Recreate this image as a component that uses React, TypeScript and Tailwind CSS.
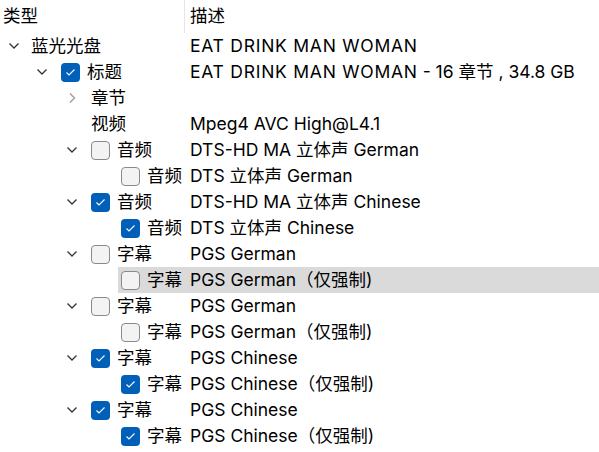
import React from "react";

type Row = {
  level: number;
  chevron?: "down" | "right";
  check?: boolean | null;
  label: string;
  desc: string;
  selected?: boolean;
};

const TITLE = "EAT DRINK MAN WOMAN";

const rows: Row[] = [
  { level: 0, chevron: "down", check: null, label: "蓝光光盘", desc: "" },
  { level: 1, chevron: "down", check: true, label: "标题", desc: " - 16 章节 , 34.8 GB" },
  { level: 2, chevron: "right", check: null, label: "章节", desc: "" },
  { level: 2, check: null, label: "视频", desc: "Mpeg4 AVC High@L4.1" },
  { level: 2, chevron: "down", check: false, label: "音频", desc: "DTS-HD MA 立体声 German" },
  { level: 3, check: false, label: "音频", desc: "DTS 立体声 German" },
  { level: 2, chevron: "down", check: true, label: "音频", desc: "DTS-HD MA 立体声 Chinese" },
  { level: 3, check: true, label: "音频", desc: "DTS 立体声 Chinese" },
  { level: 2, chevron: "down", check: false, label: "字幕", desc: "PGS German" },
  { level: 3, check: false, label: "字幕", desc: "PGS German（仅强制)", selected: true },
  { level: 2, chevron: "down", check: false, label: "字幕", desc: "PGS German" },
  { level: 3, check: false, label: "字幕", desc: "PGS German（仅强制)" },
  { level: 2, chevron: "down", check: true, label: "字幕", desc: "PGS Chinese" },
  { level: 3, check: true, label: "字幕", desc: "PGS Chinese（仅强制)" },
  { level: 2, chevron: "down", check: true, label: "字幕", desc: "PGS Chinese" },
  { level: 3, check: true, label: "字幕", desc: "PGS Chinese（仅强制)" },
];

const indentCls = ["w-[28px]", "w-[58px]", "w-[88px]", "w-[118px]"];
const treeCls = ["w-[162px]", "w-[132px]", "w-[102px]", "w-[72px]"];

function Chevron({ dir }: { dir: "down" | "right" }) {
  if (dir === "down")
    return (
      <svg width="12" height="8" viewBox="0 0 12 8">
        <path d="M1.5 1.5 L6 6 L10.5 1.5" fill="none" stroke="#333" strokeWidth="1.3" />
      </svg>
    );
  return (
    <svg width="8" height="12" viewBox="0 0 8 12">
      <path d="M2 1.5 L6.5 6 L2 10.5" fill="none" stroke="#9a9a9a" strokeWidth="1.3" />
    </svg>
  );
}

function Check({ on }: { on: boolean }) {
  if (on)
    return (
      <div className="w-[19px] h-[19px] rounded-[4px] bg-[#005fb8] flex items-center justify-center shrink-0">
        <svg width="19" height="19" viewBox="0 0 19 19">
          <path d="M5.5 9.5 L8 12 L13.5 6.5" fill="none" stroke="#fff" strokeWidth="1.1" />
        </svg>
      </div>
    );
  return <div className="w-[19px] h-[19px] rounded-[4px] bg-[#f3f3f3] border border-[#8a8a8a] shrink-0" />;
}

export default function App() {
  return (
    <div
      className="w-[599px] h-[452px] bg-white overflow-hidden text-[17.5px] text-black"
      style={{ fontFamily: 'Inter, "Noto Sans CJK SC", sans-serif' }}
    >
      <div className="flex h-[33px] items-center">
        <div className="w-[185px] h-full flex items-center pl-[3px] border-r border-[#e5e5e5]">类型</div>
        <div className="pl-[5px]">描述</div>
      </div>
      {rows.map((r, i) => (
        <div key={i} className="flex h-[26px] items-center">
          <div className={`${indentCls[r.level]} h-full flex justify-end shrink-0`}>
            <div className="w-[32px] h-full flex items-center justify-center">
              {r.chevron && <Chevron dir={r.chevron} />}
            </div>
          </div>
          <div className={`flex-1 h-full flex items-center ${r.selected ? "bg-[#dadada]" : ""}`}>
            <div className={`${treeCls[r.level]} shrink-0 flex items-center pl-[3px] whitespace-nowrap`}>
              {r.check !== null && r.check !== undefined && (
                <div className="mr-[7px]">
                  <Check on={r.check} />
                </div>
              )}
              <span>{r.label}</span>
            </div>
            <div className="whitespace-nowrap">
              {r.level < 2 && <span className="tracking-[0.75px]">{TITLE}</span>}
              {r.desc}
            </div>
          </div>
        </div>
      ))}
    </div>
  );
}
